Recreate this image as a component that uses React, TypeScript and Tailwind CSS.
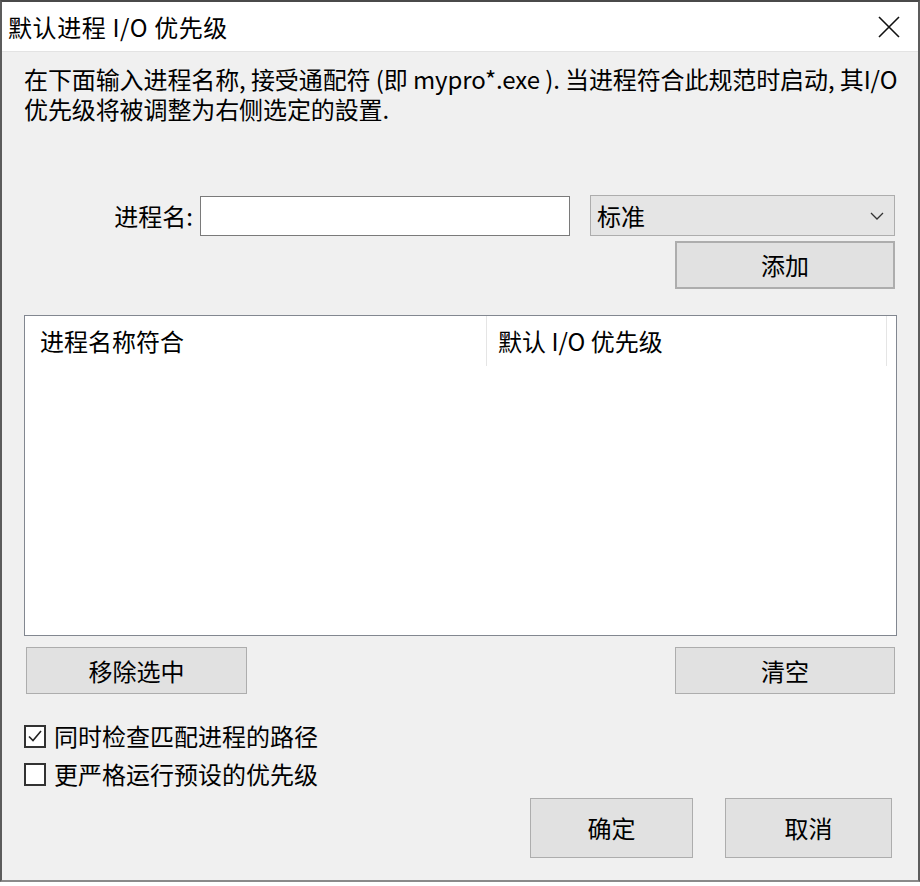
import React from 'react';

const font = { fontFamily: '"Noto Sans CJK SC", "Noto Sans", sans-serif' };

const Button = ({ label, className }: { label: string; className: string }) => (
  <button
    className={`flex items-center justify-center bg-[#e1e1e1] border border-[#adadad] text-[24px] leading-none text-black ${className}`}
  >
    {label}
  </button>
);

const CheckRow = ({ label, checked }: { label: string; checked: boolean }) => (
  <label className="flex items-center h-[38px]">
    <span className="w-[22px] h-[23px] border-2 border-[#333] bg-white flex items-center justify-center">
      {checked && (
        <svg width="16" height="16" viewBox="0 0 16 16">
          <path d="M2 8.5 L6 12.5 L14 3" fill="none" stroke="#222" strokeWidth="1.6" />
        </svg>
      )}
    </span>
    <span className="ml-[8px] text-[24px] leading-none">{label}</span>
  </label>
);

const App = () => {
  return (
    <div className="w-[920px] h-[886px] bg-white overflow-hidden text-black" style={font}>
      <div className="h-[882px] border-x-2 border-t-2 border-b-2 border-x-[#5c5c5c] border-t-[#4a4a4a] border-b-[#8a8a8a] flex flex-col">
        {/* title bar */}
        <div className="h-[50px] bg-white flex items-center justify-between border-b border-[#e3e3e3] shrink-0">
          <span className="ml-[6px] text-[24px] leading-none tracking-[0.6px]">默认进程 I/O 优先级</span>
          <svg width="22" height="22" viewBox="0 0 22 22" className="mr-[18px]">
            <path d="M1 1 L21 21 M21 1 L1 21" stroke="#111" strokeWidth="1.6" fill="none" />
          </svg>
        </div>

        <div className="flex-1 bg-[#f0f0f0] pl-[22px] pr-[21px] pt-[15px]">
          <div className="flex flex-col gap-[6px] text-[24px] leading-none tracking-[-0.1px] whitespace-nowrap">
            <div>在下面输入进程名称, 接受通配符 (即 mypro*.exe ). 当进程符合此规范时启动, 其I/O</div>
            <div>优先级将被调整为右侧选定的設置.</div>
          </div>

          <div className="mt-[74px] flex items-center h-[41px]">
            <span className="w-[169px] text-right text-[24px] leading-none">进程名:</span>
            <div className="ml-[7px] w-[370px] h-[40px] bg-white border border-[#7a7a7a]" />
            <div className="ml-[20px] w-[305px] h-[41px] bg-[#e5e5e5] border border-[#adadad] flex items-center justify-between pl-[6px] pr-[10px]">
              <span className="text-[24px] leading-none">标准</span>
              <svg width="14" height="10" viewBox="0 0 14 10">
                <path d="M1 2 L7 8 L13 2" fill="none" stroke="#333" strokeWidth="1.3" />
              </svg>
            </div>
          </div>

          <div className="mt-[5px] flex justify-end pr-[2px]">
            <Button label="添加" className="w-[220px] h-[48px] border-2 border-[#0078d7]" />
          </div>

          <div className="mt-[26px] w-[873px] h-[321px] bg-white border border-[#828790]">
            <div className="flex h-[50px] text-[24px]">
              <div className="w-[462px] border-r border-[#e5e5e5] flex items-center pl-[15px]">进程名称符合</div>
              <div className="w-[400px] border-r border-[#e5e5e5] flex items-center pl-[11px]">默认 I/O 优先级</div>
            </div>
          </div>

          <div className="mt-[11px] flex justify-between pl-[2px] pr-[2px]">
            <Button label="移除选中" className="w-[221px] h-[47px]" />
            <Button label="清空" className="w-[220px] h-[47px]" />
          </div>

          <div className="mt-[23px] flex flex-col">
            <CheckRow label="同时检查匹配进程的路径" checked />
            <CheckRow label="更严格运行预设的优先级" checked={false} />
          </div>

          <div className="mt-[5px] flex justify-end gap-[32px] pr-[5px]">
            <Button label="确定" className="w-[163px] h-[60px]" />
            <Button label="取消" className="w-[167px] h-[60px]" />
          </div>
        </div>
      </div>
    </div>
  );
};

export default App;
